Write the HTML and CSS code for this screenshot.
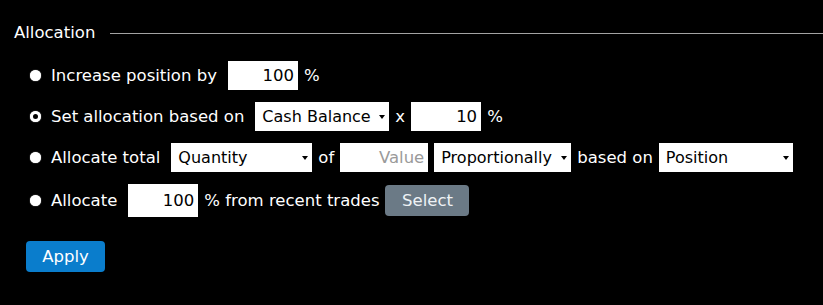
FILE: index.html
```html
<!DOCTYPE html>
<html>
<head>
<meta charset="utf-8">
<link rel="stylesheet" href="styles.css">
</head>
<body>
<div class="panel">
  <div class="header">
    <span class="title">Allocation</span>
    <span class="rule"></span>
  </div>
  <div class="rows">
    <div class="row">
      <input type="radio" name="alloc" class="radio">
      <span class="label">Increase position by</span>
      <input type="text" class="num" value="100">
      <span>%</span>
    </div>
    <div class="row">
      <input type="radio" name="alloc" class="radio" checked>
      <span class="label">Set allocation based on</span>
      <span class="sel w134"><select><option>Cash Balance</option></select></span>
      <span>x</span>
      <input type="text" class="num" value="10">
      <span>%</span>
    </div>
    <div class="row">
      <input type="radio" name="alloc" class="radio">
      <span class="label">Allocate total</span>
      <span class="sel w141"><select><option>Quantity</option></select></span>
      <span>of</span>
      <input type="text" class="num wide" placeholder="Value">
      <span class="sel w137"><select><option>Proportionally</option></select></span>
      <span>based on</span>
      <span class="sel w134"><select><option>Position</option></select></span>
    </div>
    <div class="row tall">
      <input type="radio" name="alloc" class="radio">
      <span class="label">Allocate</span>
      <input type="text" class="num" value="100">
      <span>% from recent trades</span>
      <button class="btn btn-select">Select</button>
    </div>
  </div>
  <button class="btn btn-apply">Apply</button>
</div>
</body>
</html>
```

FILE: styles.css
```css
* { box-sizing: border-box; }
html, body {
  margin: 0;
  padding: 0;
  background: #000;
  color: #fff;
  font-family: "DejaVu Sans", Verdana, sans-serif;
  font-size: 16.5px;
}
.panel {
  padding-top: 24px;
  height: 305px;
}
.header {
  display: flex;
  align-items: center;
  height: 18px;
  padding-left: 14px;
}
.title {
  line-height: 18px;
  margin-right: 15px;
}
.rule {
  flex: 1;
  height: 1px;
  background: #a3a3a3;
}
.rows {
  margin-top: 19px;
  padding-left: 30px;
  display: flex;
  flex-direction: column;
  gap: 12px;
}
.row {
  display: flex;
  align-items: center;
  gap: 6px;
  height: 29px;
  white-space: nowrap;
}
.row.tall { height: 33px; }
.radio {
  appearance: none;
  -webkit-appearance: none;
  width: 11px;
  height: 11px;
  margin: 0 4px 0 0;
  border-radius: 50%;
  background: #fff;
  box-shadow: 0 0 1px #fff;
}
.radio:checked {
  background: #000;
  border: 3px solid #fff;
}
.label { margin-right: 5px; }
.num {
  width: 70px;
  height: 29px;
  border: none;
  outline: none;
  background: #fff;
  color: #000;
  text-align: right;
  padding: 0 4px 0 4px;
  font-family: inherit;
  font-size: 16.5px;
}
.row.tall .num { height: 33px; }
.num.wide { width: 88px; }
.num::placeholder { color: #9a9a9a; }
.sel {
  position: relative;
  display: inline-block;
  height: 29px;
  background: #fff;
}
.sel.w134 { width: 134px; }
.sel.w141 { width: 141px; }
.sel.w137 { width: 137px; }
.sel select {
  appearance: none;
  -webkit-appearance: none;
  width: 100%;
  height: 100%;
  border: none;
  outline: none;
  background: transparent;
  color: #000;
  font-family: inherit;
  font-size: 16px;
  padding: 0 14px 0 7px;
  border-radius: 0;
}
.sel::after {
  content: "";
  position: absolute;
  right: 4px;
  top: 13px;
  border-left: 3px solid transparent;
  border-right: 3px solid transparent;
  border-top: 4px solid #000;
  pointer-events: none;
}
.btn {
  border: none;
  border-radius: 4px;
  font-family: inherit;
  font-size: 16.5px;
  color: #fff;
  padding: 0;
  height: 31px;
}
.btn-select {
  width: 84px;
  background: #6b7a86;
  color: #eef2f5;
}
.btn-apply {
  display: block;
  margin: 24px 0 0 26px;
  width: 79px;
  background: #0a7dcc;
}
```
